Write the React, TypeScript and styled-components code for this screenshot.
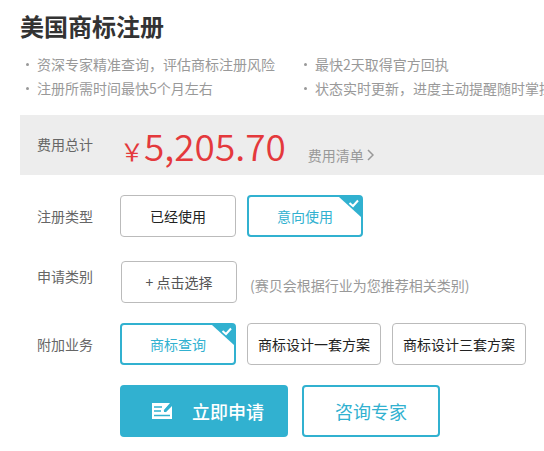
import React, { useState } from "react";
import styled, { createGlobalStyle } from "styled-components";

const accent = "#31b1d0";

const GlobalStyle = createGlobalStyle`
  * { box-sizing: border-box; }
  body {
    margin: 0;
    background: #fff;
    color: #666;
    font: 14px/24px "Noto Sans CJK SC", sans-serif;
  }
  button { font-family: inherit; cursor: pointer; }
`;

const Page = styled.main`
  padding: 8px 0 14px 20px;
  overflow: hidden;
`;

const Title = styled.h1`
  margin: 0;
  color: #333;
  font-size: 24px;
  font-weight: 700;
  line-height: 36px;
`;

const Features = styled.ul`
  display: grid;
  grid-template-columns: 278px 1fr;
  margin: 8px 0 15px;
  padding: 0;
  list-style: none;
  color: #999;
`;

const Feature = styled.li`
  display: flex;
  align-items: center;
  gap: 8px;
  padding-left: 6px;
  min-width: 0;
  white-space: nowrap;

  &::before {
    content: "";
    flex: none;
    width: 3px;
    height: 3px;
    border-radius: 50%;
    background: #999;
  }
`;

const FeeBar = styled.section`
  display: flex;
  align-items: flex-start;
  height: 60px;
  background: #ededed;
`;

const Label = styled.span`
  flex: none;
  width: 100px;
  padding-left: 17px;
  line-height: 30px;
`;

const FeeLabel = styled(Label)`
  line-height: 58px;
`;

const FeeValue = styled.div`
  display: flex;
  align-items: baseline;
  line-height: 60px;
  color: #e4393c;
`;

const Currency = styled.span`
  font-size: 24px;
`;

const Amount = styled.strong`
  font-size: 37px;
  font-weight: 350;
`;

const FeeLink = styled.a`
  display: flex;
  align-items: center;
  gap: 3px;
  margin-left: 22px;
  color: #999;
  line-height: 24px;
  text-decoration: none;
`;

const Form = styled.form`
  display: flex;
  flex-direction: column;
  gap: 20px;
  padding-top: 20px;
`;

const Row = styled.div<{ $top?: boolean }>`
  display: flex;
  align-items: ${(p) => (p.$top ? "flex-start" : "center")};
  padding-top: ${(p) => (p.$top ? 4 : 0)}px;
`;

const Options = styled.div`
  display: flex;
  gap: 11px;
`;

const Option = styled.label<{ $wide?: boolean }>`
  position: relative;
  display: flex;
  align-items: center;
  justify-content: center;
  width: ${(p) => (p.$wide ? 134 : 116)}px;
  height: 42px;
  border: 1px solid #bbb;
  border-radius: 4px;
  color: #222;
  white-space: nowrap;
  cursor: pointer;

  &:has(input:checked) {
    border: 2px solid ${accent};
    color: ${accent};
  }
`;

const HiddenInput = styled.input`
  position: absolute;
  inset: 0;
  width: 100%;
  height: 100%;
  margin: 0;
  opacity: 0;
  cursor: pointer;
`;

const Corner = styled.svg`
  position: absolute;
  top: 0;
  right: 0;
  pointer-events: none;
`;

const PickButton = styled.button`
  width: 116px;
  height: 42px;
  margin-left: 1px;
  padding: 0;
  border: 1px solid #bbb;
  border-radius: 4px;
  background: #fff;
  color: #555;
  font-size: 14px;
`;

const Note = styled.span`
  padding: 12px 0 0 13px;
  color: #999;
  white-space: nowrap;
`;

const Actions = styled.div`
  display: flex;
  gap: 14px;
  padding-left: 100px;
`;

const ActionButton = styled.button<{ $primary?: boolean }>`
  display: flex;
  align-items: center;
  justify-content: center;
  gap: 20px;
  width: ${(p) => (p.$primary ? 168 : 138)}px;
  height: 52px;
  padding: 0 0 0 ${(p) => (p.$primary ? 8 : 0)}px;
  border: 2px solid ${accent};
  border-radius: 4px;
  background: ${(p) => (p.$primary ? accent : "#fff")};
  color: ${(p) => (p.$primary ? "#fff" : accent)};
  font-size: 18px;
  font-weight: ${(p) => (p.$primary ? 500 : 400)};
`;

const features = [
  "资深专家精准查询，评估商标注册风险",
  "最快2天取得官方回执",
  "注册所需时间最快5个月左右",
  "状态实时更新，进度主动提醒随时掌控",
];

const CheckCorner = () => (
  <Corner width="22" height="20" viewBox="0 0 22 20" aria-hidden="true">
    <path d="M0 0H22V20Z" fill={accent} />
    <path d="M10.5 6L14 9L19 3.5" fill="none" stroke="#fff" strokeWidth="2" />
  </Corner>
);

type ChoiceProps = {
  type: "radio" | "checkbox";
  name: string;
  text: string;
  checked: boolean;
  wide?: boolean;
  onChange: () => void;
};

const Choice = ({ type, name, text, checked, wide, onChange }: ChoiceProps) => (
  <Option $wide={wide}>
    <HiddenInput type={type} name={name} checked={checked} onChange={onChange} />
    {text}
    {checked && <CheckCorner />}
  </Option>
);

export default function App() {
  const [usage, setUsage] = useState("意向使用");
  const [extras, setExtras] = useState(["商标查询"]);

  const toggle = (name: string) =>
    setExtras((list) =>
      list.includes(name) ? list.filter((x) => x !== name) : [...list, name],
    );

  return (
    <>
      <GlobalStyle />
      <Page>
        <Title>美国商标注册</Title>
        <Features>
          {features.map((text) => (
            <Feature key={text}>{text}</Feature>
          ))}
        </Features>
        <FeeBar>
          <FeeLabel>费用总计</FeeLabel>
          <FeeValue>
            <Currency>￥</Currency>
            <Amount>5,205.70</Amount>
            <FeeLink href="#fees">
              费用清单
              <svg width="7" height="12" viewBox="0 0 7 12" aria-hidden="true">
                <path d="M1 1L6 6L1 11" fill="none" stroke="#999" strokeWidth="1.5" />
              </svg>
            </FeeLink>
          </FeeValue>
        </FeeBar>
        <Form onSubmit={(e) => e.preventDefault()}>
          <Row role="radiogroup" aria-label="注册类型">
            <Label>注册类型</Label>
            <Options>
              {["已经使用", "意向使用"].map((text) => (
                <Choice
                  key={text}
                  type="radio"
                  name="usage"
                  text={text}
                  checked={usage === text}
                  onChange={() => setUsage(text)}
                />
              ))}
            </Options>
          </Row>
          <Row $top>
            <Label>申请类别</Label>
            <PickButton type="button">+ 点击选择</PickButton>
            <Note>(赛贝会根据行业为您推荐相关类别)</Note>
          </Row>
          <Row role="group" aria-label="附加业务">
            <Label>附加业务</Label>
            <Options>
              {["商标查询", "商标设计一套方案", "商标设计三套方案"].map((text) => (
                <Choice
                  key={text}
                  type="checkbox"
                  name="extras"
                  text={text}
                  wide={text.length > 4}
                  checked={extras.includes(text)}
                  onChange={() => toggle(text)}
                />
              ))}
            </Options>
          </Row>
          <Actions>
            <ActionButton type="submit" $primary>
              <svg width="20" height="16" viewBox="0 0 20 16" aria-hidden="true">
                <path d="M0 0H18L12 7V9H14L20 3V16H0Z" fill="#fff" />
                <path d="M2 4H10M2 8H9M2 12.5H18" stroke={accent} strokeWidth="1.3" />
                <path d="M12.5 8.5L19 1.5" stroke={accent} strokeWidth="2.4" />
              </svg>
              立即申请
            </ActionButton>
            <ActionButton type="button">咨询专家</ActionButton>
          </Actions>
        </Form>
      </Page>
    </>
  );
}
